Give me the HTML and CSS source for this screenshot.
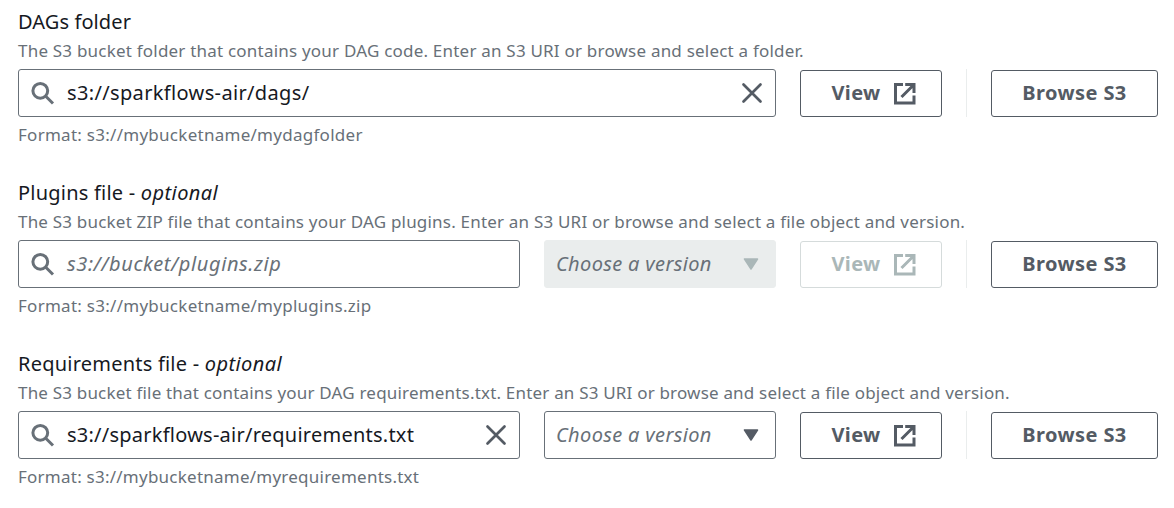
FILE: index.html
```html
<!DOCTYPE html>
<html lang="en">
<head>
<meta charset="utf-8">
<title>DAG code in Amazon S3</title>
<link rel="stylesheet" href="styles.css">
</head>
<body>
<svg width="0" height="0" class="defs">
  <symbol id="search" viewBox="0 0 24 24"><circle cx="9.300" cy="9.800" r="7.400"/><path d="M14.500 15l7.500 7.500"/></symbol>
  <symbol id="close" viewBox="0 0 24 24"><path d="M3.500 3.500l17 17M20.500 3.500l-17 17"/></symbol>
  <symbol id="external" viewBox="0 0 24 24"><path d="M10 2.500H2.500v18.500H21V13.500M12.200 2.500H21v8.500M20.500 3L8.500 15"/></symbol>
  <symbol id="arrow" viewBox="0 0 16 12"><path d="M1.500 1h13L8 11z"/></symbol>
</svg>
<main class="form">
  <section class="field dags">
    <h2 class="label">DAGs folder</h2>
    <p class="description">The S3 bucket folder that contains your DAG code. Enter an S3 URI or browse and select a folder.</p>
    <div class="row">
      <div class="input wide"><svg class="icon search"><use href="#search"/></svg><span class="value">s3://sparkflows-air/dags/</span><svg class="icon close"><use href="#close"/></svg></div>
      <button class="button view"><span>View</span><svg class="icon"><use href="#external"/></svg></button>
      <div class="divider"></div>
      <button class="button browse"><span>Browse S3</span></button>
    </div>
    <p class="hint">Format: s3://mybucketname/mydagfolder</p>
  </section>
  <section class="field plugins">
    <h2 class="label">Plugins file - <i>optional</i></h2>
    <p class="description">The S3 bucket ZIP file that contains your DAG plugins. Enter an S3 URI or browse and select a file object and version.</p>
    <div class="row">
      <div class="input"><svg class="icon search"><use href="#search"/></svg><span class="value placeholder">s3://bucket/plugins.zip</span></div>
      <div class="select disabled"><span>Choose a version</span><svg class="arrow"><use href="#arrow"/></svg></div>
      <button class="button view" disabled><span>View</span><svg class="icon"><use href="#external"/></svg></button>
      <div class="divider"></div>
      <button class="button browse"><span>Browse S3</span></button>
    </div>
    <p class="hint">Format: s3://mybucketname/myplugins.zip</p>
  </section>
  <section class="field requirements">
    <h2 class="label">Requirements file - <i>optional</i></h2>
    <p class="description">The S3 bucket file that contains your DAG requirements.txt. Enter an S3 URI or browse and select a file object and version.</p>
    <div class="row">
      <div class="input"><svg class="icon search"><use href="#search"/></svg><span class="value">s3://sparkflows-air/requirements.txt</span><svg class="icon close"><use href="#close"/></svg></div>
      <div class="select"><span>Choose a version</span><svg class="arrow"><use href="#arrow"/></svg></div>
      <button class="button view"><span>View</span><svg class="icon"><use href="#external"/></svg></button>
      <div class="divider"></div>
      <button class="button browse"><span>Browse S3</span></button>
    </div>
    <p class="hint">Format: s3://mybucketname/myrequirements.txt</p>
  </section>
</main>
</body>
</html>
```
FILE: styles.css
```css
* { box-sizing: border-box; }
body { margin: 0; background: #fff; color: #16191f; font-family: "Noto Sans", sans-serif; }
.defs { display: none; }
.form { padding: 8px 16px 0 18px; }
.field { height: 171px; }
.label, .description, .hint { margin: 0; white-space: nowrap; }
.label { height: 28px; font-size: 20px; line-height: 28px; font-weight: 400; letter-spacing: .22px; }
.label i { letter-spacing: .42px; }
.dags .label { letter-spacing: .1px; }
.description, .hint { font-size: 17px; color: #687078; }
.description { height: 33px; line-height: 30px; letter-spacing: .2px; }
.dags .description { letter-spacing: .21px; }
.requirements .description { letter-spacing: .19px; }
.hint { line-height: 36px; letter-spacing: .27px; }
.requirements .hint { letter-spacing: .24px; }
.row { display: flex; height: 48px; }
.input, .select { display: flex; align-items: center; height: 48px; border: 1px solid #687078; border-radius: 3px; font-size: 20px; white-space: nowrap; }
.input { width: 502px; padding: 0 11px 0 12px; }
.wide { width: 758px; }
.value { flex: 1; margin-left: 12px; padding-bottom: 2px; letter-spacing: .35px; }
.requirements .value { letter-spacing: .24px; }
.placeholder, .select { color: #687078; font-style: italic; }
.value.placeholder { letter-spacing: .61px; }
.select { width: 232px; margin-left: 24px; padding: 0 16px 0 11px; justify-content: space-between; letter-spacing: .35px; }
.select span { padding-bottom: 2px; }
.arrow { width: 16px; height: 12px; fill: #545b64; stroke: #545b64; stroke-width: 1.5; stroke-linejoin: round; }
.disabled { background: #eaeded; border-color: #eaeded; }
.disabled .arrow { fill: #aab7b8; stroke: #aab7b8; }
.icon { width: 24px; height: 24px; fill: none; stroke: #545b64; stroke-width: 3; flex: none; }
.icon.search { stroke: #687078; }
.icon.close { stroke-width: 2.7; stroke-linecap: round; }
.button { display: flex; align-items: center; justify-content: center; height: 47px; margin-top: 1px; padding: 0; border: 1px solid #545b64; border-radius: 3px; background: #fff; color: #545b64; font: 700 20px "Noto Sans", sans-serif; letter-spacing: .4px; white-space: nowrap; }
.button span { padding-bottom: 2px; }
.view { width: 142px; margin-left: 24px; padding-left: 6px; gap: 12px; }
.browse { width: 167px; }
.button:disabled { color: #aab7b8; border-color: #d5dbdb; }
.button:disabled .icon { stroke: #aab7b8; }
.divider { width: 1px; margin: 0 24px; background: #eaeded; }
```
